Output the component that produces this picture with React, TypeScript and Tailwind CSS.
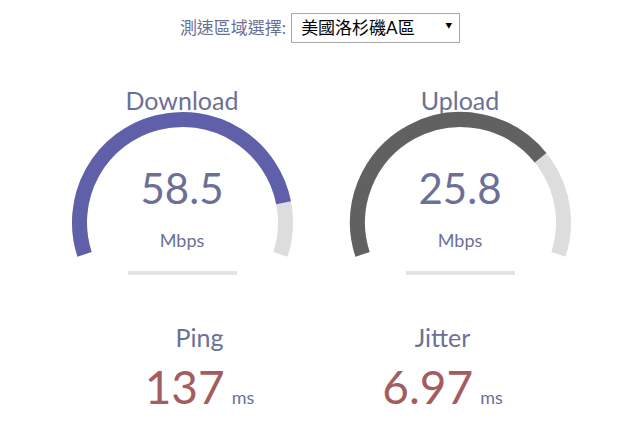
import React from 'react';

const FONT = "font-['Lato','Noto_Sans_CJK_TC',sans-serif]";

const CX = 136.5;
const CY = 137.5;
const R = 103;

const point = (deg: number) => {
  const rad = (deg * Math.PI) / 180;
  return [CX + R * Math.cos(rad), CY + R * Math.sin(rad)];
};

const arcPath = (from: number, to: number) => {
  const [x0, y0] = point(from);
  const [x1, y1] = point(to);
  const large = to - from > 180 ? 1 : 0;
  return `M ${x0.toFixed(2)} ${y0.toFixed(2)} A ${R} ${R} 0 ${large} 1 ${x1.toFixed(2)} ${y1.toFixed(2)}`;
};

// same curve LibreSpeed uses to turn mbps into a meter fill
const mbpsToAmount = (s: number) => 1 - 1 / Math.pow(1.3, Math.sqrt(s));

interface GaugeProps {
  name: string;
  value: string;
  color: string;
}

const Gauge: React.FC<GaugeProps> = ({ name, value, color }) => {
  const start = -198;
  const end = 18;
  const fill = start + 216 * mbpsToAmount(parseFloat(value));

  return (
    <div className="relative w-[272px] h-[200px]">
      <svg className="absolute inset-0" width="272" height="200" viewBox="0 0 272 200">
        <path d={arcPath(start, end)} fill="none" stroke="#DDDDDD" strokeWidth="15" />
        <path d={arcPath(start, fill)} fill="none" stroke={color} strokeWidth="15" />
        <rect x="82" y="186" width="109" height="4" fill="#E3E3E3" />
      </svg>
      <div className="absolute left-0 right-0 top-[3px] text-center text-[25px] leading-none text-[#6b7196]">
        {name}
      </div>
      <div className="absolute left-0 right-0 top-[82px] text-center text-[42px] leading-none text-[#6b7196]">
        {value}
      </div>
      <div className="absolute left-0 right-0 top-[146px] text-center text-[18px] leading-none text-[#6b7196]">
        Mbps
      </div>
    </div>
  );
};

const SmallStat: React.FC<{ name: string; value: string }> = ({ name, value }) => (
  <div className="w-[238px] flex flex-col items-center">
    <div className="text-[25px] leading-none text-[#6b7196]">{name}</div>
    <div className="mt-[14px] flex items-baseline gap-[7px]">
      <span className="text-[46px] leading-none text-[#a35d5f]">{value}</span>
      <span className="text-[18px] leading-none text-[#6b7196]">ms</span>
    </div>
  </div>
);

export default function App() {
  return (
    <div className={`w-[632px] h-[422px] bg-white overflow-hidden ${FONT}`}>
      <div className="pt-[13px] flex justify-center items-center pl-[8px]">
        <span className="text-[17px] text-[#6b7196]">測速區域選擇:</span>
        <div className="relative ml-[5px]">
          <select
            defaultValue="la"
            className="appearance-none w-[169px] h-[30px] border border-[#a9a9a9] bg-white pl-[9px] text-[17px] text-black outline-none"
          >
            <option value="la">美國洛杉磯A區</option>
          </select>
          <span className="pointer-events-none absolute right-[8px] top-[9px] text-[7px] leading-none text-black">▼</span>
        </div>
      </div>

      <div className="mt-[42px] flex justify-center gap-[6px] pl-[10px]">
        <Gauge name="Download" value="58.5" color="#6060AA" />
        <Gauge name="Upload" value="25.8" color="#616161" />
      </div>

      <div className="mt-[40px] flex justify-center gap-[5px] pl-[10px]">
        <SmallStat name="Ping" value="137" />
        <SmallStat name="Jitter" value="6.97" />
      </div>
    </div>
  );
}
